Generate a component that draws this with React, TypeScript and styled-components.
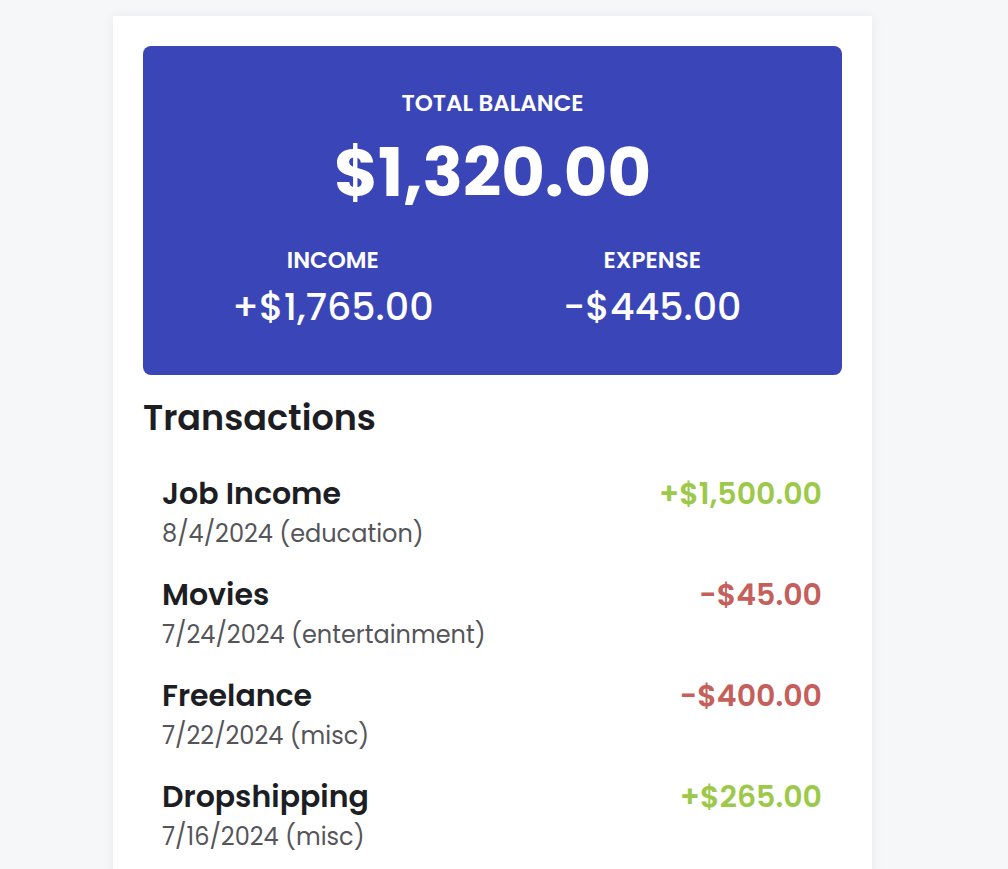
import React from "react";
import styled, { createGlobalStyle } from "styled-components";

const Global = createGlobalStyle`
  html, body { margin: 0; padding: 0; background: #f6f7f9; }
  body { font-family: "Poppins", Inter, "Open Sans", sans-serif; }
`;

const Page = styled.div`
  padding: 16px 0 0 113px;
`;

const Card = styled.main`
  width: 759px;
  min-height: 853px;
  box-sizing: border-box;
  background: #fff;
  padding: 30px;
  box-shadow: 0 0 12px rgba(20, 30, 60, 0.06);
`;

const Balance = styled.section`
  background: #3a45b8;
  border-radius: 8px;
  padding: 41px 30px 0;
  color: #fff;
  text-align: center;
  height: 329px;
  box-sizing: border-box;
`;

const Label = styled.div`
  font-size: 23px;
  font-weight: 600;
  text-transform: uppercase;
  line-height: 32px;
`;

const Total = styled.div`
  font-size: 67px;
  font-weight: 700;
  line-height: 80px;
  margin-top: 14px;
`;

const Split = styled.div`
  display: grid;
  grid-template-columns: 1fr 1fr;
  margin-top: 31px;
`;

const Col = styled.div`
  display: flex;
  flex-direction: column;
  align-items: center;
`;

const SubAmount = styled.div`
  font-size: 38px;
  font-weight: 500;
  line-height: 46px;
  margin-top: 8px;
`;

const Heading = styled.h2`
  font-size: 35px;
  font-weight: 600;
  color: #1d1e24;
  margin: 23px 0 36px;
  line-height: 40px;
`;

const List = styled.ul`
  list-style: none;
  margin: 0;
  padding: 0 20px 0 19px;
  display: flex;
  flex-direction: column;
  gap: 22px;
`;

const Row = styled.li`
  display: flex;
  justify-content: space-between;
  align-items: flex-start;
`;

const Info = styled.div`
  display: flex;
  flex-direction: column;
`;

const Title = styled.div`
  font-size: 30px;
  font-weight: 600;
  color: #1d1e24;
  line-height: 40px;
`;

const Meta = styled.div`
  font-size: 24px;
  font-weight: 400;
  color: #555559;
  line-height: 39px;
`;

const Amount = styled.div<{ $positive: boolean }>`
  font-size: 30px;
  font-weight: 600;
  line-height: 40px;
  color: ${(p) => (p.$positive ? "#9dc94a" : "#c55f5b")};
`;

const txs = [
  { name: "Job Income", meta: "8/4/2024 (education)", amount: "+$1,500.00", pos: true },
  { name: "Movies", meta: "7/24/2024 (entertainment)", amount: "-$45.00", pos: false },
  { name: "Freelance", meta: "7/22/2024 (misc)", amount: "-$400.00", pos: false },
  { name: "Dropshipping", meta: "7/16/2024 (misc)", amount: "+$265.00", pos: true },
];

export default function App() {
  return (
    <>
      <Global />
      <Page>
        <Card>
          <Balance>
            <Label>Total Balance</Label>
            <Total>$1,320.00</Total>
            <Split>
              <Col>
                <Label>Income</Label>
                <SubAmount>+$1,765.00</SubAmount>
              </Col>
              <Col>
                <Label>Expense</Label>
                <SubAmount>-$445.00</SubAmount>
              </Col>
            </Split>
          </Balance>
          <Heading>Transactions</Heading>
          <List>
            {txs.map((t) => (
              <Row key={t.name}>
                <Info>
                  <Title>{t.name}</Title>
                  <Meta>{t.meta}</Meta>
                </Info>
                <Amount $positive={t.pos}>{t.amount}</Amount>
              </Row>
            ))}
          </List>
        </Card>
      </Page>
    </>
  );
}
